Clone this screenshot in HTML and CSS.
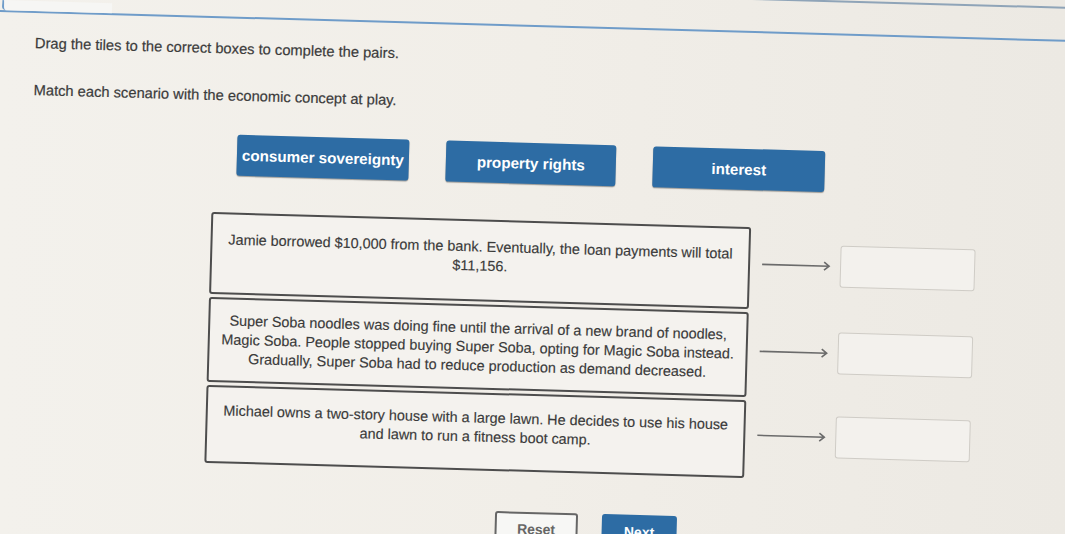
FILE: index.html
```html
<!DOCTYPE html>
<html>
<head>
<meta charset="utf-8">
<link rel="stylesheet" href="styles.css">
</head>
<body>
<div class="photo">
  <div class="chrome-line"></div>
  <div class="topbar"><div class="tab"></div></div>
  <div class="instructions">
    <p class="line1">Drag the tiles to the correct boxes to complete the pairs.</p>
    <p class="line2">Match each scenario with the economic concept at play.</p>
  </div>
  <div class="tiles">
    <div class="tile t1">consumer sovereignty</div>
    <div class="tile t2">property rights</div>
    <div class="tile t3">interest</div>
  </div>
  <div class="pairs">
    <div class="pair p1">
      <div class="scenario">Jamie borrowed $10,000 from the bank. Eventually, the loan payments will total<br>$11,156.</div>
      <div class="arrow"><svg width="70" height="12" viewBox="0 0 70 12"><path d="M1 6H68M63 2L68 6L63 10" fill="none" stroke="#6b6b6b" stroke-width="1.6"/></svg></div>
      <div class="drop"></div>
    </div>
    <div class="pair p2">
      <div class="scenario">Super Soba noodles was doing fine until the arrival of a new brand of noodles,<br>Magic Soba. People stopped buying Super Soba, opting for Magic Soba instead.<br>Gradually, Super Soba had to reduce production as demand decreased.</div>
      <div class="arrow"><svg width="70" height="12" viewBox="0 0 70 12"><path d="M1 6H68M63 2L68 6L63 10" fill="none" stroke="#6b6b6b" stroke-width="1.6"/></svg></div>
      <div class="drop"></div>
    </div>
    <div class="pair p3">
      <div class="scenario">Michael owns a two-story house with a large lawn. He decides to use his house<br>and lawn to run a fitness boot camp.</div>
      <div class="arrow"><svg width="70" height="12" viewBox="0 0 70 12"><path d="M1 6H68M63 2L68 6L63 10" fill="none" stroke="#6b6b6b" stroke-width="1.6"/></svg></div>
      <div class="drop"></div>
    </div>
  </div>
  <div class="buttons">
    <div class="btn reset">Reset</div>
    <div class="btn next">Next</div>
  </div>
</div>
</body>
</html>
```
FILE: styles.css
```css
html, body {
  margin: 0;
  padding: 0;
  height: 100%;
  overflow: hidden;
}
body {
  background: linear-gradient(90deg, #f3f1ec 0%, #f1eee8 50%, #ece9e3 100%);
  font-family: "Liberation Sans", Arial, sans-serif;
  color: #3a3a3a;
}
.photo {
  margin-top: -30px;
  width: 1120px;
  transform: rotate(1.6deg);
  transform-origin: 0 30px;
}
.chrome-line {
  height: 2px;
  margin-top: 7px;
  margin-bottom: 21px;
  background: #8fa4b8;
}
.topbar {
  height: 10px;
  border-bottom: 2px solid #6f9cc9;
  display: flex;
}
.tab {
  width: 108px;
  margin-left: 2px;
  border-left: 2px solid #6f9cc9;
  border-bottom-left-radius: 4px;
  background: #f6f6f4;
}
.instructions {
  padding-left: 36px;
}
.instructions p {
  margin: 0;
  font-size: 14.7px;
  line-height: 18px;
  color: #3b3b3b;
  -webkit-text-stroke: 0.2px #3b3b3b;
}
.line1 { margin-top: 21px !important; }
.line2 { margin-top: 29px !important; }
.tiles {
  display: flex;
  gap: 37px;
  margin-left: 241px;
  margin-top: 30px;
}
.tile {
  width: 172px;
  height: 41px;
  background: #2d6ca4;
  border-radius: 3px;
  box-shadow: 0 1px 1px rgba(0,0,0,0.35);
  color: #fff;
  font-weight: bold;
  font-size: 15.2px;
  display: flex;
  align-items: center;
  justify-content: center;
  white-space: nowrap;
}
.t2 { width: 170px; }
.pairs {
  margin-top: 37px;
  margin-left: 217px;
  display: flex;
  flex-direction: column;
  gap: 3px;
}
.pair {
  display: flex;
  align-items: center;
}
.scenario {
  width: 540px;
  border: 2px solid #4d4d4d;
  border-radius: 3px;
  background: #f4f2ee;
  box-sizing: border-box;
  font-size: 14.4px;
  line-height: 19px;
  text-align: center;
  color: #3a3a3a;
  -webkit-text-stroke: 0.15px #3a3a3a;
  display: flex;
  align-items: center;
  justify-content: center;
  padding: 0 8px;
  white-space: nowrap;
}
.p1 .scenario { height: 82px; padding-bottom: 8px; }
.p2 .scenario { height: 85px; }
.p3 .scenario { height: 78px; padding-bottom: 8px; }
.arrow {
  width: 70px;
  margin-left: 11px;
  margin-bottom: 8px;
  display: flex;
}
.drop {
  width: 135px;
  height: 42px;
  margin-left: 9px;
  margin-bottom: 8px;
  border: 1.5px solid #cfccc6;
  border-radius: 3px;
  background: #f3f1ed;
  box-sizing: border-box;
}
.buttons {
  display: flex;
  gap: 24px;
  margin-left: 509px;
  margin-top: 40px;
}
.btn {
  height: 34px;
  box-sizing: border-box;
  border-radius: 3px;
  font-size: 14px;
  font-weight: bold;
  display: flex;
  align-items: center;
  justify-content: center;
}
.reset {
  width: 83px;
  border: 2px solid #666;
  background: #f7f7f5;
  color: #666;
}
.next {
  width: 75px;
  background: #2d6ca4;
  color: #fff;
}
```
